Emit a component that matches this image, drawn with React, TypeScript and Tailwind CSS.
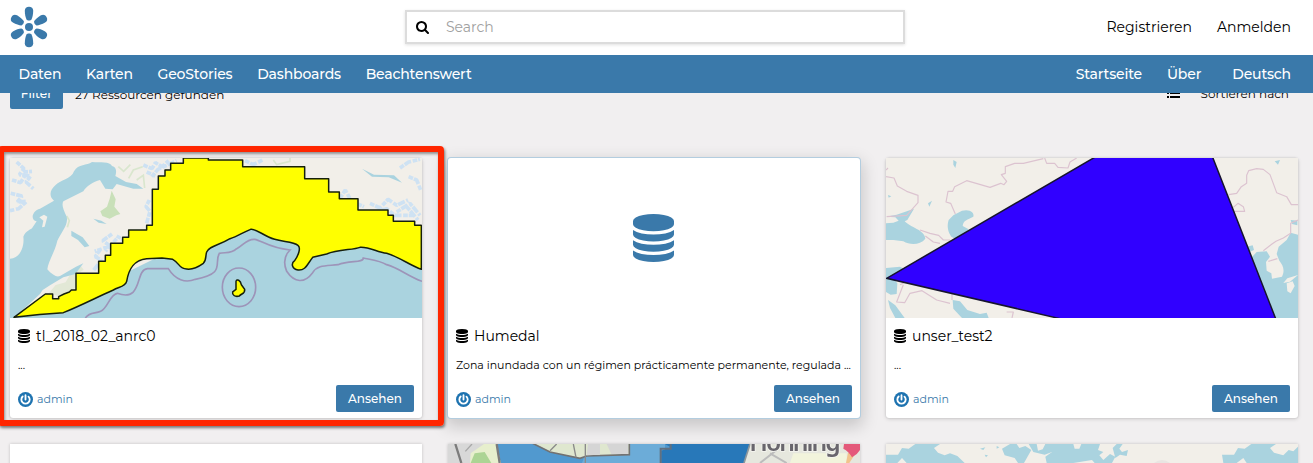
import React from "react";

type Kind = "coast" | "database" | "polygon";

function DatabaseIcon({ className }: { className: string }) {
  return (
    <svg viewBox="0 0 1536 1792" className={className} fill="currentColor">
      <path d="M768 768q237 0 443-43t325-127v170q0 69-103 128t-280 93.5-385 34.5-385-34.5-280-93.5-103-128v-170q119 84 325 127t443 43zm0 768q237 0 443-43t325-127v170q0 69-103 128t-280 93.5-385 34.5-385-34.5-280-93.5-103-128v-170q119 84 325 127t443 43zm0-384q237 0 443-43t325-127v170q0 69-103 128t-280 93.5-385 34.5-385-34.5-280-93.5-103-128v-170q119 84 325 127t443 43zm0-1152q208 0 385 34.5t280 93.5 103 128v128q0 69-103 128t-280 93.5-385 34.5-385-34.5-280-93.5-103-128v-128q0-69 103-128t280-93.5 385-34.5z" />
    </svg>
  );
}

function SearchIcon() {
  return (
    <svg viewBox="0 128 1664 1664" className="h-[13px] w-[13px] shrink-0" fill="#000">
      <path d="M1152 832q0-185-131.5-316.5t-316.5-131.5-316.5 131.5-131.5 316.5 131.5 316.5 316.5 131.5 316.5-131.5 131.5-316.5zm512 832q0 52-38 90t-90 38q-54 0-90-38l-343-342q-179 124-399 124-143 0-273.5-55.5t-225-150-150-225-55.5-273.5 55.5-273.5 150-225 225-150 273.5-55.5 273.5 55.5 225 150 150 225 55.5 273.5q0 220-124 399l343 343q37 37 37 90z" />
    </svg>
  );
}

function Logo() {
  return (
    <svg viewBox="0 0 38 40" className="-mt-px h-10 w-[38px] overflow-visible" fill="#3a79aa">
      <circle cx="19" cy="20" r="4" />
      {[0, 60, 120, 180, 240, 300].map((a) => (
        <path key={a} transform={`rotate(${a} 19 20)`} d="M14.800 3.800C14.800 1.200 16.500 -.2 19 -.2s4.200 1.400 4.200 4c0 3.400-.8 7-1.700 8.700-.9 1.300-4.100 1.300-5 0C15.600 10.800 14.800 7.200 14.800 3.800Z" />
      ))}
    </svg>
  );
}

function Avatar() {
  return (
    <svg viewBox="0 0 45 45" className="h-[15px] w-[15px]">
      <circle cx="22.500" cy="22.500" r="22.500" fill="#1e73b0" />
      <path d="M14 13.500a12.500 12.500 0 1 0 17.500.3M22.500 9.500v13" fill="none" stroke="#fff" strokeWidth="5.500" strokeLinecap="round" />
    </svg>
  );
}

function CoastMap() {
  return (
    <svg viewBox="30 54 1236 480" className="block h-40 w-[412px] blur-[0.3px]" preserveAspectRatio="none">
      <path fill="#f2efe9" d="M30 54H1266V534H30z" />
      <g fill="none" stroke="#b5d8fa" strokeWidth="11" strokeDasharray="14 3 22 5" strokeLinejoin="bevel" opacity=".6">
        <path d="M50 66L72 86L58 104L92 108L78 126L100 146M36 120L62 128L74 108M32 160L66 168L52 186L80 184L56 206L30 212M70 96L96 94" />
        <path d="M430 75L456 86L466 68L486 80L506 62M455 110L474 88L500 76L530 62M440 96L466 108M448 180L438 200L450 214L440 250M336 282L308 302L330 318L284 334M350 288L372 300M300 330L286 350L304 360L280 392M350 296L316 334" />
        <path d="M735 62L760 74L788 60M1020 175L1036 150L1054 184L1092 200M1110 190L1140 204L1164 178L1190 196L1224 180M1130 215L1160 206L1184 226H1240M1200 84L1226 66L1260 58M1226 110L1250 120L1262 150M1190 216L1230 190L1260 226M1220 200L1254 240" />
      </g>
      <path fill="#c4deb4" opacity=".9" d="M335 152l12 26-4 22 18 22-12 4-20 10-22-8-6-14 20-14 8-24zM205 425l14 4-10 20-20-8z" />
      <path fill="#e2e8d6" d="M215 395l28-16 8 10-20 14-4 40-50 26-30-10 20-24 30-8z" />
      <path fill="none" stroke="#cfe3c2" strokeWidth="5" opacity=".7" d="M355 80l16 14 20-20M386 115l14-25 28-10M410 120l20-14 4 38M820 60l10 14 40-10v-10M200 228l8 14-6 20" />
      <path fill="#aad3df" d="M30 356C60 356 74 320 70 290C78 270 94 270 98 262L110 244C90 240 96 212 120 206L162 182C144 166 152 148 166 136C180 120 214 118 222 94C236 70 260 78 276 66C300 68 330 64 336 78C350 82 350 94 346 108L378 126L410 132L430 146L400 146L350 132L338 148L316 146L300 120C280 124 258 140 250 154L190 184C184 194 190 208 200 230C206 254 184 276 172 302C166 332 144 366 142 388C158 406 170 412 180 408L228 380L250 370L226 402L190 412L150 436L128 450L120 462L42 534H30z" />
      <path fill="#aad3df" d="M214 272l34 20 20 26-14 4-20-22-20-12zM280 236l24 6 16 10-24-4zM1086 86l36 18 60 2 24 22-40-16-50-2z" />
      <path fill="#f2efe9" d="M118 232l14-8 10 6-8 30-8 2 4-20z" />
      <path fill="#aad3df" d="M36 534L375 400L700 240L1266 340V534z" />
      <g fill="none" stroke="#9c8eb5" strokeWidth="5" opacity=".9">
        <path d="M256 534C270 514 284 522 302 514C324 504 330 462 352 460C430 488 404 390 442 386H505C526 420 556 430 586 418C680 400 640 370 658 340C676 336 694 342 710 326C730 316 740 296 764 298C786 302 808 324 870 330C850 350 850 370 860 394C884 430 914 430 938 398C952 374 980 378 1014 374C1050 360 1090 370 1090 354C1120 360 1140 362 1160 374C1200 386 1220 406 1266 424" />
        <ellipse cx="717" cy="442" rx="50" ry="58" />
      </g>
      <path fill="#ff0" stroke="#16200c" strokeWidth="4.500" strokeLinejoin="round" d="M42 532L136 462H158V476H176V470L192 462L208 456L214 450H228V400H296V364H316V346H332V310H368V292H386V270H440V256H457V148H475V108H495V90H512V70H550V54H625V60H728V80H914V116H986V156H1018V176H1074V210H1164V226H1180V244H1244V256H1264V388C1230 376 1196 350 1160 340C1130 336 1108 320 1080 322C1060 330 1014 328 980 342L938 352C920 376 916 392 894 390C876 388 872 370 884 362C894 348 904 324 894 316C880 304 850 306 824 298C790 288 766 264 752 268C730 276 712 290 690 296C654 318 630 316 620 336C616 346 620 360 610 370C596 380 580 390 560 387C536 386 540 370 518 358L486 354L440 356C400 360 386 388 380 424C376 440 358 440 340 450C290 472 240 498 190 518Q120 522 42 532Z" />
      <path fill="#ff0" stroke="#16200c" strokeWidth="4.500" d="M708 424C710 416 722 420 724 434L734 448C736 462 724 460 718 468C704 472 696 464 698 456L708 448Z" />
    </svg>
  );
}

function PolygonMap() {
  return (
    <svg viewBox="48 54 1236 480" className="block h-40 w-[412px]" preserveAspectRatio="none">
      <path fill="#f2efe9" d="M48 54H1284V534H48z" />
      <g fill="#aad3df">
        <path d="M48 230L80 224L132 206L112 240L104 244C120 262 164 270 166 296C150 316 120 316 100 304L70 300L48 300V250L70 248L86 242L76 232z" />
        <path d="M276 212C300 206 314 218 310 230C292 240 280 240 278 258L296 268L280 290L262 300L244 290C234 276 230 258 236 240L250 226z" />
        <path d="M48 384L90 380L110 390L70 416L82 430L80 462L62 464L48 456zM54 480L76 496L104 534H76L60 504zM248 480L270 484L292 510L330 522L350 518L356 534H276L250 506z" />
        <path d="M1284 534H1210L1145 352L1160 336L1190 334L1200 350L1188 366L1190 392L1204 400L1206 416L1236 410C1246 390 1238 374 1228 362L1220 342L1226 320L1250 300L1262 278L1284 284z" />
        <path d="M1130 320l18-4 4 14-14 6zM1262 240l20 2v14l-16-4zM1214 64l16-4-6 14zM250 60l10 6-4 18-6-10zM174 190l12-8-8 18zM54 165l10 4-8 4z" />
      </g>
      <path fill="#f2efe9" d="M1250 430l18-6 6 14-12 22-10-6zM1284 405l-24 20-20 4 12-14z" />
      <g fill="none" stroke="#dcc3d0" strokeWidth="3.500" strokeLinejoin="round">
        <path d="M48 110L72 114L82 138L110 154L144 166V188L110 226L50 230M48 90l6-6M256 222L242 190L228 186L234 154H248L254 140L290 122L360 142L392 130L402 134L410 124L394 104L406 100V80L434 70H460L520 56M524 54L530 70H554L564 82L594 84L600 66L620 54" />
        <path d="M150 270L180 280L206 286L220 300L240 300M166 288L190 306L210 310M100 434L80 486L104 488L120 460L156 452L200 480L240 490M246 462V480M410 516h20l-4 18M90 434l12-6" />
        <path d="M1076 164L1100 160L1114 140L1130 130V106L1136 92L1160 86L1180 88L1200 104L1220 158L1250 170L1264 194H1284M1090 202L1104 190L1120 200L1124 214L1090 214M1284 240L1262 250V280L1240 294L1218 304L1206 312L1180 332M1195 364L1222 356" />
      </g>
      <path fill="#3000ff" stroke="#17142e" strokeWidth="4.500" d="M50 415L674 52H1028L1217 536H570Z" />
    </svg>
  );
}

function CityMap() {
  return (
    <svg viewBox="24 372 1236 57" className="block h-[19px] w-[412px] blur-[0.4px]" preserveAspectRatio="none">
      <path fill="#5199cf" d="M24 372H1260V429H24z" />
      <path fill="#d8d8d8" d="M24 372H170L182 429H24z" />
      <path fill="#e7efcd" d="M92 400l40-28h38l12 57H90z" />
      <path fill="#acd494" d="M104 400l30-4 20 33H92z" />
      <path fill="none" stroke="#7c7c7c" strokeWidth="7" d="M46 372l18 57M170 372l9 57" />
      <path fill="none" stroke="#a8a8a8" strokeWidth="4" d="M96 372l-20 22" />
      <path fill="#6cacd8" d="M435 404L568 404V372H675V390H660L664 429H426z" />
      <path fill="#dfe7cf" stroke="#727272" strokeWidth="5" d="M274 368L330 396L420 415L440 408L568 404V368z" />
      <path fill="#d5d5d5" d="M444 372H480V404L440 406zM500 372h64v30h-50z" />
      <path fill="none" stroke="#8a8a8a" strokeWidth="4" d="M330 392l20-20M400 372l8 40M436 372v57" />
      <path fill="#2878b9" d="M675 372H930L912 429H664V392L692 382z" />
      <path fill="none" stroke="#617080" strokeWidth="6" d="M662 429V386H692V372" />
      <path fill="#e6e7de" d="M930 372H1260V429H912z" />
      <path fill="#f2f4dc" d="M1060 400h160v29h-170z" />
      <path fill="none" stroke="#8d979c" strokeWidth="5" d="M930 372l-18 57" />
      <path fill="none" stroke="#bcbcbc" strokeWidth="6" d="M1010 390l-50 39M990 400l50 29" />
      <path fill="#f2c38c" d="M1224 398l20 6-16 25h-10z" />
      <text x="928" y="394" fontFamily="Noto Sans" fontSize="74" fontWeight="600" fill="#69666d" stroke="#f5f5f0" strokeWidth="5" paintOrder="stroke" textLength="274">Hönning</text>
      <path fill="#e4597a" d="M1212 372H1260V390Q1252 404 1236 412Q1226 394 1210 386z" />
    </svg>
  );
}

function WorldMap() {
  return (
    <svg viewBox="48 372 1236 57" className="block h-[19px] w-[412px]" preserveAspectRatio="none">
      <path fill="#f2efe9" d="M48 372H1284V429H48z" />
      <g fill="#aad3df">
        <path d="M48 404L84 404L96 384L116 386L136 372H210L192 384L204 398L224 406L240 400L262 408L284 429H110L96 414L82 429H48z" />
        <path d="M396 386L420 372H440L448 384L466 378L484 390L462 429H444L434 414L404 406zM476 372H690L684 390L700 396L688 406L700 420L720 402L736 410L726 429H674L666 420L610 429H530L526 410L546 396L524 404L490 396z" />
        <path d="M728 384l12-12h18l-10 14 8 10 18-6-4 18-20-4-14 10zM1056 404L1092 404L1104 384L1124 386L1144 372H1218L1200 384L1212 398L1240 406L1256 390L1270 394L1284 380V429H1130L1120 414L1100 429H1060z" />
        <path d="M330 386l16-4-6 8zM344 404l10 2-6 6zM380 378l8 4-8 4z" />
      </g>
      <path fill="#f2efe9" d="M500 372h26l-8 16-14 4zM610 372h24l-6 14h-14z" />
      <path fill="#e9e5e2" d="M852 429q24-18 48 0z" />
    </svg>
  );
}

function Card({ title, text, kind }: { title: string; text: string; kind: Kind }) {
  const active = kind === "database";
  return (
    <article
      className={
        active
          ? "h-[260px] w-[412px] rounded-[3px] bg-white shadow-[0_0_0_1px_#b3cddf,0_6px_16px_3px_rgba(0,0,0,0.17)]"
          : "h-[260px] w-[412px] rounded-[3px] bg-white shadow-[0_0_2px_rgba(0,0,0,0.16),0_1px_4px_rgba(0,0,0,0.14)]"
      }
    >
      <div className="flex h-40 items-center justify-center overflow-hidden">
        {kind === "coast" && <CoastMap />}
        {kind === "polygon" && <PolygonMap />}
        {active && <DatabaseIcon className="mr-px h-12 w-[41px] text-[#3a79aa]" />}
      </div>
      <div className="px-2">
        <h3 className="flex h-9 items-center gap-[6px] text-[14px] text-black">
          <DatabaseIcon className="h-[14px] w-[12px]" />
          <span className="pt-px">{title}</span>
        </h3>
        <p className="h-[23px] text-[11px] leading-[23px] whitespace-nowrap text-black">{text}</p>
        <div className="mt-2 flex items-center justify-between">
          <a className="flex items-center gap-1 pt-[2px] text-[11px] text-[#3a79aa]">
            <Avatar />
            <span>admin</span>
          </a>
          <button className="h-[27px] w-[78px] rounded-[2px] bg-[#3a79aa] text-[12px] font-medium text-white">Ansehen</button>
        </div>
      </div>
    </article>
  );
}

export default function App() {
  return (
    <div className="relative flex h-[463px] w-[1313px] flex-col overflow-hidden bg-[#f1eff0] font-['Montserrat','Inter',sans-serif]">
      <header className="flex h-[55px] shrink-0 items-center bg-white pr-[22px] pl-[10px]">
        <Logo />
        <div className="-mt-px ml-[357px] flex h-[34px] w-[500px] items-center border-2 border-[#dcdcdc] bg-white pt-px pl-[9px] shadow-[0_1px_3px_rgba(0,0,0,0.12)]">
          <SearchIcon />
          <span className="ml-[17px] text-[14px] text-[#a0a0a0]">Search</span>
        </div>
        <div className="ml-auto flex gap-[25px] text-[14px] text-black">
          <a>Registrieren</a>
          <a>Anmelden</a>
        </div>
      </header>
      <nav className="flex h-[38px] shrink-0 items-center justify-between bg-[#3a79aa] pr-[22px] pl-[18.500px] text-[14px] font-medium tracking-[-0.16px] text-white">
        <div className="flex gap-[24.700px]">
          <a>Daten</a>
          <a>Karten</a>
          <a>GeoStories</a>
          <a>Dashboards</a>
          <a>Beachtenswert</a>
        </div>
        <div className="flex gap-[25px]">
          <a>Startseite</a>
          <a>Über</a>
          <a className="ml-[6px]">Deutsch</a>
        </div>
      </nav>
      <main className="flex-1 overflow-hidden pl-[10px]">
        <div className="-mt-[14px] flex h-[30px] items-center pr-[24px] text-[12px] text-black">
          <button className="h-[30px] w-[53px] rounded-[2px] bg-[#3a79aa] text-[12px] font-medium text-white">Filter</button>
          <span className="ml-3 pt-px">27 Ressourcen gefunden</span>
          <svg viewBox="0 0 13 10" className="-mt-[2px] ml-auto h-[10px] w-[13px]">
            <path d="M0 0h2v2H0zM3 0h10v2H3zM0 4h2v2H0zM3 4h10v2H3zM0 8h2v2H0zM3 8h10v2H3z" />
          </svg>
          <span className="ml-[21px]">Sortieren nach</span>
        </div>
        <div className="mt-[49px] grid grid-cols-[repeat(3,412px)] gap-[26px]">
          <Card kind="coast" title="tl_2018_02_anrc0" text="..." />
          <Card kind="database" title="Humedal" text="Zona inundada con un régimen prácticamente permanente, regulada ..." />
          <Card kind="polygon" title="unser_test2" text="..." />
          <div className="h-[60px] bg-white shadow-[0_0_3px_rgba(0,0,0,0.2)]" />
          <div className="h-[60px] bg-white shadow-[0_0_3px_rgba(0,0,0,0.2)]">
            <CityMap />
          </div>
          <div className="h-[60px] bg-white shadow-[0_0_3px_rgba(0,0,0,0.2)]">
            <WorldMap />
          </div>
        </div>
      </main>
      <div className="pointer-events-none absolute top-[146px] -left-[2px] h-[280px] w-[446px] rounded-[4px] border-6 border-[#ff2600] shadow-[1px_2px_3px_rgba(0,0,0,0.5),inset_1px_2px_3px_rgba(0,0,0,0.4)]" />
    </div>
  );
}
